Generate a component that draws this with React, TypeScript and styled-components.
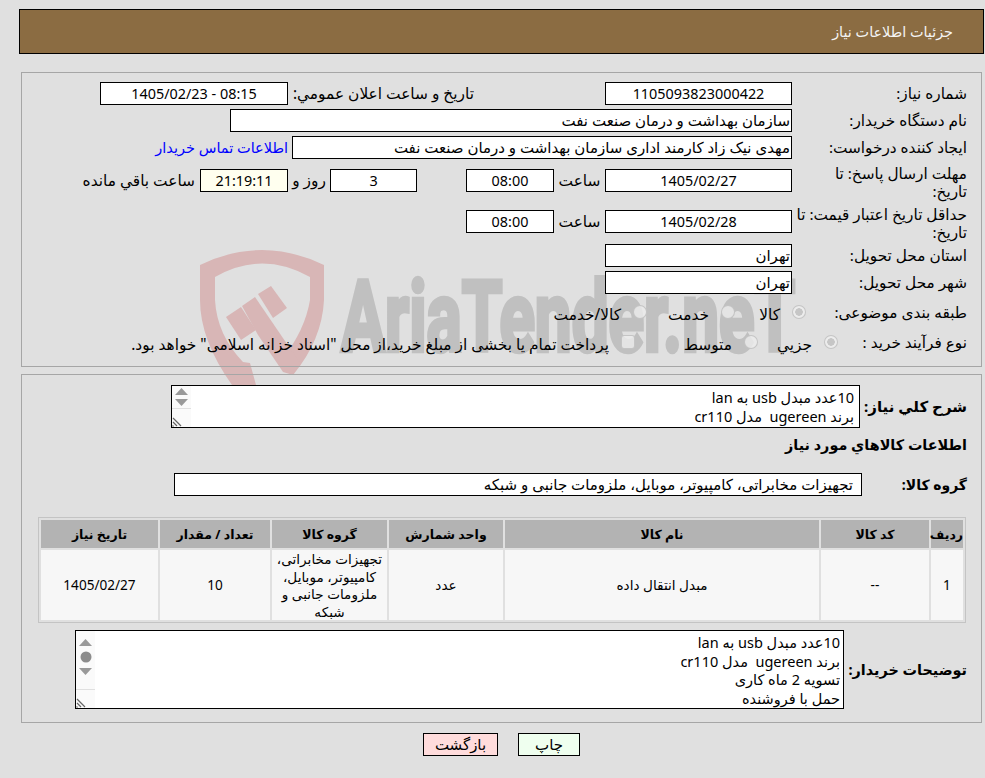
import React from 'react';
import styled, { createGlobalStyle } from 'styled-components';

const GlobalStyle = createGlobalStyle`
  html, body {
    margin: 0;
    padding: 0;
    background: #e0e0e0;
  }
  body {
    font-family: "Noto Sans", "DejaVu Sans", sans-serif;
    font-size: 14px;
    color: #000;
  }
`;

const Page = styled.div`
  position: relative;
  direction: rtl;
  padding: 9px 1px 0 19px;
  height: 769px;
`;

const Watermark = styled.svg`
  position: absolute;
  left: 190px;
  top: 240px;
  width: 620px;
  height: 150px;
`;

const Content = styled.div`
  position: relative;
`;

const TitleBar = styled.div`
  height: 43px;
  line-height: 43px;
  background: #8b6c42;
  border: 1px solid #000;
  padding-right: 30px;
  color: #f4f4f4;
  font-size: 14.4px;
`;

const Panel = styled.div<{ $top: number; $h: number }>`
  margin: ${(p) => p.$top}px 2px 0 2px;
  height: ${(p) => p.$h}px;
  box-sizing: border-box;
  border: 1px solid #a6a6a6;
  padding: 9px 14px 0 0;
`;

const Row = styled.div<{ $h?: number; $mt?: number }>`
  display: flex;
  align-items: center;
  height: ${(p) => p.$h ?? 22}px;
  margin-top: ${(p) => p.$mt ?? 0}px;
`;

const Label = styled.div<{ $w?: number }>`
  width: ${(p) => p.$w ?? 175}px;
  flex: none;
  font-size: 15.3px;
  line-height: 17px;
  white-space: nowrap;
`;

const TwoLineLabel = styled(Label)`
  line-height: 18px;
  padding-top: 3px;
`;

const StrongLabel = styled(Label)<{ $fs: number }>`
  font-size: ${(p) => p.$fs}px;
  font-weight: bold;
`;

const InlineLabel = styled.div<{ $w: number; $mr?: number; $center?: boolean }>`
  flex: none;
  width: ${(p) => p.$w}px;
  margin-right: ${(p) => p.$mr ?? 0}px;
  font-size: 15.4px;
  text-align: ${(p) => (p.$center ? 'center' : 'right')};
  white-space: nowrap;
`;

const Field = styled.div<{ $w: number; $center?: boolean; $warm?: boolean; $ml?: number; $pr?: number }>`
  flex: none;
  width: ${(p) => p.$w}px;
  height: 23px;
  box-sizing: border-box;
  font-size: ${(p) => (p.$center ? 14.4 : 15)}px;
  line-height: 21px;
  background: ${(p) => (p.$warm ? '#ffffef' : '#fff')};
  border: 1px solid #000;
  margin-left: ${(p) => p.$ml ?? 0}px;
  padding: 0 ${(p) => p.$pr ?? 1}px 0 1px;
  text-align: ${(p) => (p.$center ? 'center' : 'right')};
  white-space: nowrap;
  overflow: hidden;
`;

const ContactLink = styled.a`
  color: #0000ff;
  font-size: 14.5px;
  margin-right: 4px;
  white-space: nowrap;
  text-decoration: none;
`;

const Option = styled.div<{ $w?: number }>`
  display: flex;
  align-items: center;
  flex: none;
  width: ${(p) => (p.$w ? `${p.$w}px` : 'auto')};
  font-size: 15.4px;
  white-space: nowrap;
`;

const OptionText = styled.span`
  padding-top: 4px;
`;

const Radio = styled.span<{ $on?: boolean; $square?: boolean }>`
  flex: none;
  width: 14px;
  height: 14px;
  box-sizing: border-box;
  margin-left: 12px;
  border-radius: ${(p) => (p.$square ? '3px' : '50%')};
  border: 1px solid rgba(190, 190, 190, 0.85);
  background: ${(p) =>
    p.$on
      ? 'radial-gradient(circle, #c6c6c6 0 3.5px, #ececec 4px)'
      : 'rgba(236, 236, 236, 0.8)'};
`;

const Memo = styled.div<{ $w: number; $h: number }>`
  display: flex;
  flex: none;
  width: ${(p) => p.$w}px;
  height: ${(p) => p.$h}px;
  box-sizing: border-box;
  border: 1px solid #000;
  background: #fff;
  overflow: hidden;
`;

const MemoText = styled.div<{ $lh: number; $pr: number }>`
  flex: 1;
  padding: 2px ${(p) => p.$pr}px 0 0;
  font-size: 14.5px;
  line-height: ${(p) => p.$lh}px;
  white-space: pre;
  overflow: hidden;
`;

const Rail = styled.div`
  flex: none;
  width: 19px;
  display: flex;
  flex-direction: column;
  align-items: center;
  background: #fafafa;
`;

const RailButton = styled.svg<{ $mt: number }>`
  display: block;
  width: 13px;
  margin-top: ${(p) => p.$mt}px;
  flex: none;
`;

const RailThumb = styled.svg`
  display: block;
  width: 12px;
  height: 12px;
  margin-top: 5px;
  flex: none;
`;

const Grip = styled.div`
  margin-top: auto;
  width: 100%;
  height: 19px;
  box-sizing: border-box;
  border-top: 1px solid #e0e0e0;
  display: flex;
  align-items: flex-end;
  justify-content: flex-end;
`;

const GridTable = styled.table`
  width: 928px;
  margin: 22px 1px 0 0;
  table-layout: fixed;
  border-collapse: separate;
  border-spacing: 2px;
  border: 1px solid #c4c4c4;
`;

const HeadCell = styled.th`
  height: 28px;
  padding: 0;
  background: #b3b3b3;
  font-size: 12.5px;
  font-weight: bold;
  text-align: center;
  white-space: nowrap;
`;

const BodyCell = styled.td`
  height: 70px;
  padding: 0 2px;
  background: #f7f7f7;
  font-size: 13.6px;
  text-align: center;
  line-height: 17.5px;
`;

const Actions = styled.div`
  display: flex;
  justify-content: center;
  gap: 20px;
  margin-top: 10px;
`;

const ActionButton = styled.div<{ $w: number; $bg: string }>`
  width: ${(p) => p.$w}px;
  height: 23px;
  box-sizing: border-box;
  font-size: 15px;
  line-height: 21px;
  border: 1px solid #000;
  background: ${(p) => p.$bg};
  text-align: center;
`;

const ArrowUp = ({ mt }: { mt: number }) => (
  <RailButton $mt={mt} viewBox="0 0 13 7" height="7">
    <path d="M6.5 0L13 7H0z" fill="#999" />
  </RailButton>
);

const ArrowDown = ({ mt }: { mt: number }) => (
  <RailButton $mt={mt} viewBox="0 0 13 7" height="7">
    <path d="M0 0h13L6.5 7z" fill="#999" />
  </RailButton>
);

const GripMark = () => (
  <svg width="10" height="10" viewBox="0 0 10 10">
    <path d="M1 1l8 8M1 5l4 4M0.5 8.5l1 1" stroke="#666" strokeWidth="1.2" fill="none" />
  </svg>
);

const columns = [32, 108, 314, 114, 115, 110, 117];

export default function App() {
  return (
    <>
      <GlobalStyle />
      <Page>
        <Watermark viewBox="190 240 620 150">
          <g fill="#d8b6b6">
            <path d="M200 265Q262 235 324 265L324 300Q322 340 293 375L283 358Q305 330 310 300L310 277Q262 250 215 277L215 300Q217 335 243 362L250 363L256 385L232 385Q200 340 200 300Z" />
            <path d="M226 317L241 307L256 330L241 340Z" />
            <path d="M242 306L255 297L300 363L293 375L283 372L258 335Z" />
            <path d="M258 294L271 286L287 308L273 318Z" />
          </g>
          <text
            transform="translate(341 351) scale(0.67 1)"
            fontFamily="Roboto, sans-serif"
            fontWeight="700"
            fontSize="98"
            fill="#c0c0c0"
            stroke="#c0c0c0"
            strokeWidth="4.5"
            direction="ltr"
          >
            AriaTender.neT
          </text>
        </Watermark>
        <Content>
          <TitleBar>جزئیات اطلاعات نیاز</TitleBar>

          <Panel $top={18} $h={295}>
            <Row>
              <Label>شماره نیاز:</Label>
              <Field $w={187} $center>1105093823000422</Field>
              <InlineLabel $w={186} $mr={131}>تاریخ و ساعت اعلان عمومي:</InlineLabel>
              <Field $w={188} $center>08:15 - 1405/02/23</Field>
            </Row>
            <Row $mt={5}>
              <Label>نام دستگاه خریدار:</Label>
              <Field $w={562}>سازمان بهداشت و درمان صنعت نفت</Field>
            </Row>
            <Row $mt={5}>
              <Label>ایجاد کننده درخواست:</Label>
              <Field $w={500}>مهدی نیک زاد کارمند اداری سازمان بهداشت و درمان صنعت نفت</Field>
              <ContactLink>اطلاعات تماس خریدار</ContactLink>
            </Row>
            <Row $h={34} $mt={5}>
              <TwoLineLabel>مهلت ارسال پاسخ: تا<br />تاریخ:</TwoLineLabel>
              <Field $w={187} $center>1405/02/27</Field>
              <InlineLabel $w={51} $center>ساعت</InlineLabel>
              <Field $w={88} $center $ml={49}>08:00</Field>
              <Field $w={87} $center>3</Field>
              <InlineLabel $w={42} $center>روز و</InlineLabel>
              <Field $w={88} $center $warm>21:19:11</Field>
              <InlineLabel $w={117} $mr={5}>ساعت باقي مانده</InlineLabel>
            </Row>
            <Row $h={34} $mt={7}>
              <TwoLineLabel>حداقل تاریخ اعتبار قیمت: تا<br />تاریخ:</TwoLineLabel>
              <Field $w={187} $center>1405/02/28</Field>
              <InlineLabel $w={51} $center>ساعت</InlineLabel>
              <Field $w={88} $center>08:00</Field>
            </Row>
            <Row $mt={6}>
              <Label>استان محل تحویل:</Label>
              <Field $w={187}>تهران</Field>
            </Row>
            <Row $mt={5}>
              <Label>شهر محل تحویل:</Label>
              <Field $w={187}>تهران</Field>
            </Row>
            <Row $mt={8}>
              <Label $w={161}>طبقه بندی موضوعی:</Label>
              <Option $w={71}><Radio $on /><OptionText>کالا</OptionText></Option>
              <Option $w={88}><Radio /><OptionText>خدمت</OptionText></Option>
              <Option><Radio /><OptionText>کالا/خدمت</OptionText></Option>
            </Row>
            <Row $mt={8}>
              <Label $w={129}>نوع فرآیند خرید :</Label>
              <Option $w={80}><Radio $on /><OptionText>جزيي</OptionText></Option>
              <Option $w={123}><Radio /><OptionText>متوسط</OptionText></Option>
              <Option><Radio $square /><OptionText>پرداخت تمام یا بخشی از مبلغ خرید،از محل "اسناد خزانه اسلامی" خواهد بود.</OptionText></Option>
            </Row>
          </Panel>

          <Panel $top={7} $h={349}>
            <Row $h={43} $mt={1}>
              <StrongLabel $w={107} $fs={15}>شرح کلي نیاز:</StrongLabel>
              <Memo $w={689} $h={43}>
                <MemoText $lh={19} $pr={5}>{'10عدد مبدل usb به lan\nبرند ugereen  مدل cr110'}</MemoText>
                <Rail>
                  <ArrowUp mt={2} />
                  <ArrowDown mt={4} />
                  <Grip><GripMark /></Grip>
                </Rail>
              </Memo>
            </Row>
            <Row $mt={5}>
              <StrongLabel $w={300} $fs={14.4}>اطلاعات کالاهاي مورد نیاز</StrongLabel>
            </Row>
            <Row $mt={18}>
              <StrongLabel $w={105} $fs={14}>گروه کالا:</StrongLabel>
              <Field $w={688} $pr={8}>تجهیزات مخابراتی، کامپیوتر، موبایل، ملزومات جانبی و شبکه</Field>
            </Row>
            <GridTable>
              <colgroup>
                {columns.map((w, i) => (
                  <col key={i} style={{ width: w }} />
                ))}
              </colgroup>
              <thead>
                <tr>
                  <HeadCell>ردیف</HeadCell>
                  <HeadCell>کد کالا</HeadCell>
                  <HeadCell>نام کالا</HeadCell>
                  <HeadCell>واحد شمارش</HeadCell>
                  <HeadCell>گروه کالا</HeadCell>
                  <HeadCell>تعداد / مقدار</HeadCell>
                  <HeadCell>تاریخ نیاز</HeadCell>
                </tr>
              </thead>
              <tbody>
                <tr>
                  <BodyCell>1</BodyCell>
                  <BodyCell>--</BodyCell>
                  <BodyCell>مبدل انتقال داده</BodyCell>
                  <BodyCell>عدد</BodyCell>
                  <BodyCell>تجهیزات مخابراتی، کامپیوتر، موبایل، ملزومات جانبی و شبکه</BodyCell>
                  <BodyCell>10</BodyCell>
                  <BodyCell>1405/02/27</BodyCell>
                </tr>
              </tbody>
            </GridTable>
            <Row $h={79} $mt={7}>
              <StrongLabel $w={123} $fs={14.4}>توضیحات خریدار:</StrongLabel>
              <Memo $w={769} $h={79}>
                <MemoText $lh={18.5} $pr={3}>{'10عدد مبدل usb به lan\nبرند ugereen  مدل cr110\nتسویه 2 ماه کاری\nحمل با فروشنده'}</MemoText>
                <Rail>
                  <ArrowUp mt={8} />
                  <RailThumb viewBox="0 0 12 12">
                    <circle cx="6" cy="6" r="5.5" fill="#8c8c8c" />
                  </RailThumb>
                  <ArrowDown mt={5} />
                  <Grip><GripMark /></Grip>
                </Rail>
              </Memo>
            </Row>
          </Panel>

          <Actions>
            <ActionButton $w={62} $bg="#efffef">چاپ</ActionButton>
            <ActionButton $w={75} $bg="#ffdcdc">بازگشت</ActionButton>
          </Actions>
        </Content>
      </Page>
    </>
  );
}
